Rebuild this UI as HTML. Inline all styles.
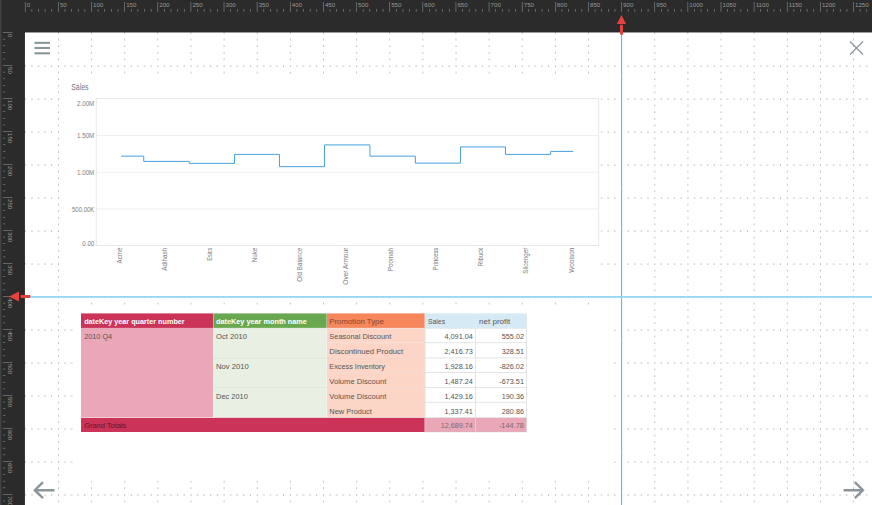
<!DOCTYPE html>
<html lang="en"><head><meta charset="utf-8"><title>Report Designer</title>
<style>

html,body{margin:0;padding:0;background:#2b2b2b;}
body{width:872px;height:505px;overflow:hidden;background:#2b2b2b;font-family:"Liberation Sans",sans-serif;}
#app{position:absolute;left:0;top:0;width:1320px;height:770px;transform-origin:0 0;transform:scale(0.6626,0.6598);background:#2b2b2b;overflow:hidden;}
#edge{position:absolute;left:0;top:0;width:1.6px;height:100%;background:#444;}
#canvas{position:absolute;left:38.0px;top:49.0px;right:0;bottom:0;}
svg{position:absolute;left:0;top:0;overflow:visible;}
.abs{position:absolute;}
.el{position:absolute;background:#fff;}
.fit{display:inline-block;transform-origin:0 50%;white-space:nowrap;}
.r .fit{transform-origin:100% 50%;}
table{border-collapse:collapse;position:absolute;table-layout:fixed;}
td,th{padding:0;margin:0;overflow:hidden;white-space:nowrap;text-align:left;vertical-align:top;font-weight:normal;box-sizing:border-box;}

</style></head><body>
<div id="app">
<div id="edge"></div>
<div id="canvas">
<svg id="grid" width="1320" height="770" style="top:0.59px;left:0.10px">
<rect x="-0.35" y="-0.79" width="1320" height="770" fill="#fff"/>
<defs><pattern id="dots" x="-0.5" y="-0.5" width="50" height="50" patternUnits="userSpaceOnUse">
<rect x="0" y="0" width="1.1" height="1.1" fill="#2a2a2a"/>
<rect x="10" y="0" width="1.1" height="1.1" fill="#2a2a2a"/>
<rect x="20" y="0" width="1.1" height="1.1" fill="#2a2a2a"/>
<rect x="30" y="0" width="1.1" height="1.1" fill="#2a2a2a"/>
<rect x="40" y="0" width="1.1" height="1.1" fill="#2a2a2a"/>
<rect x="0" y="10" width="1.1" height="1.1" fill="#2a2a2a"/>
<rect x="0" y="20" width="1.1" height="1.1" fill="#2a2a2a"/>
<rect x="0" y="30" width="1.1" height="1.1" fill="#2a2a2a"/>
<rect x="0" y="40" width="1.1" height="1.1" fill="#2a2a2a"/>
</pattern></defs>
<rect x="5" y="5" width="1320" height="770" fill="url(#dots)"/>
<rect x="49.5" y="-0.5" width="1.1" height="1.1" fill="#2a2a2a"/>
<rect x="99.5" y="-0.5" width="1.1" height="1.1" fill="#2a2a2a"/>
<rect x="149.5" y="-0.5" width="1.1" height="1.1" fill="#2a2a2a"/>
<rect x="199.5" y="-0.5" width="1.1" height="1.1" fill="#2a2a2a"/>
<rect x="249.5" y="-0.5" width="1.1" height="1.1" fill="#2a2a2a"/>
<rect x="299.5" y="-0.5" width="1.1" height="1.1" fill="#2a2a2a"/>
<rect x="349.5" y="-0.5" width="1.1" height="1.1" fill="#2a2a2a"/>
<rect x="399.5" y="-0.5" width="1.1" height="1.1" fill="#2a2a2a"/>
<rect x="449.5" y="-0.5" width="1.1" height="1.1" fill="#2a2a2a"/>
<rect x="499.5" y="-0.5" width="1.1" height="1.1" fill="#2a2a2a"/>
<rect x="549.5" y="-0.5" width="1.1" height="1.1" fill="#2a2a2a"/>
<rect x="599.5" y="-0.5" width="1.1" height="1.1" fill="#2a2a2a"/>
<rect x="649.5" y="-0.5" width="1.1" height="1.1" fill="#2a2a2a"/>
<rect x="699.5" y="-0.5" width="1.1" height="1.1" fill="#2a2a2a"/>
<rect x="749.5" y="-0.5" width="1.1" height="1.1" fill="#2a2a2a"/>
<rect x="799.5" y="-0.5" width="1.1" height="1.1" fill="#2a2a2a"/>
<rect x="849.5" y="-0.5" width="1.1" height="1.1" fill="#2a2a2a"/>
<rect x="899.5" y="-0.5" width="1.1" height="1.1" fill="#2a2a2a"/>
<rect x="949.5" y="-0.5" width="1.1" height="1.1" fill="#2a2a2a"/>
<rect x="999.5" y="-0.5" width="1.1" height="1.1" fill="#2a2a2a"/>
<rect x="1049.5" y="-0.5" width="1.1" height="1.1" fill="#2a2a2a"/>
<rect x="1099.5" y="-0.5" width="1.1" height="1.1" fill="#2a2a2a"/>
<rect x="1149.5" y="-0.5" width="1.1" height="1.1" fill="#2a2a2a"/>
<rect x="1199.5" y="-0.5" width="1.1" height="1.1" fill="#2a2a2a"/>
<rect x="1249.5" y="-0.5" width="1.1" height="1.1" fill="#2a2a2a"/>
<rect x="1299.5" y="-0.5" width="1.1" height="1.1" fill="#2a2a2a"/>
<rect x="-0.5" y="49.5" width="1.1" height="1.1" fill="#2a2a2a"/>
<rect x="-0.5" y="99.5" width="1.1" height="1.1" fill="#2a2a2a"/>
<rect x="-0.5" y="149.5" width="1.1" height="1.1" fill="#2a2a2a"/>
<rect x="-0.5" y="199.5" width="1.1" height="1.1" fill="#2a2a2a"/>
<rect x="-0.5" y="249.5" width="1.1" height="1.1" fill="#2a2a2a"/>
<rect x="-0.5" y="299.5" width="1.1" height="1.1" fill="#2a2a2a"/>
<rect x="-0.5" y="349.5" width="1.1" height="1.1" fill="#2a2a2a"/>
<rect x="-0.5" y="399.5" width="1.1" height="1.1" fill="#2a2a2a"/>
<rect x="-0.5" y="449.5" width="1.1" height="1.1" fill="#2a2a2a"/>
<rect x="-0.5" y="499.5" width="1.1" height="1.1" fill="#2a2a2a"/>
<rect x="-0.5" y="549.5" width="1.1" height="1.1" fill="#2a2a2a"/>
<rect x="-0.5" y="599.5" width="1.1" height="1.1" fill="#2a2a2a"/>
<rect x="-0.5" y="649.5" width="1.1" height="1.1" fill="#2a2a2a"/>
<rect x="-0.5" y="699.5" width="1.1" height="1.1" fill="#2a2a2a"/>
</svg>
<div class="el" id="chart" style="left:54.06px;top:65.13px;width:814.37px;height:332.22px">
<svg width="814.4" height="332.2" viewBox="54.06 65.13 814.37 332.22" font-family="Liberation Sans, sans-serif">
<line x1="107.26" x2="865.64" y1="156.52" y2="156.52" stroke="#ebebeb" stroke-width="1.2"/>
<line x1="107.26" x2="865.64" y1="212.14" y2="212.14" stroke="#ebebeb" stroke-width="1.2"/>
<line x1="107.26" x2="865.64" y1="267.76" y2="267.76" stroke="#ebebeb" stroke-width="1.2"/>
<rect x="107.26" y="100.67" width="758.38" height="222.42" fill="none" stroke="#e2e2e2" stroke-width="1.2"/>
<text x="69.46" y="88.24" font-size="13.6" fill="#767676" textLength="26.1" lengthAdjust="spacingAndGlyphs">Sales</text>
<text x="104.32" y="111.76" font-size="10.8" fill="#7e7e7e" text-anchor="end" textLength="26.0" lengthAdjust="spacingAndGlyphs">2.00M</text>
<text x="104.32" y="160.72" font-size="10.8" fill="#7e7e7e" text-anchor="end" textLength="26.0" lengthAdjust="spacingAndGlyphs">1.50M</text>
<text x="104.32" y="216.19" font-size="10.8" fill="#7e7e7e" text-anchor="end" textLength="26.0" lengthAdjust="spacingAndGlyphs">1.00M</text>
<text x="104.32" y="271.81" font-size="10.8" fill="#7e7e7e" text-anchor="end" textLength="33.6" lengthAdjust="spacingAndGlyphs">500.00K</text>
<text x="104.32" y="323.95" font-size="10.8" fill="#7e7e7e" text-anchor="end" textLength="18.1" lengthAdjust="spacingAndGlyphs">0.00</text>
<path d="M144.99 187.81 H178.95 V195.77 H247.62 V198.80 H315.91 V185.16 H383.82 V203.73 H451.74 V170.76 H520.41 V187.81 H588.92 V198.42 H656.99 V173.79 H724.90 V185.16 H793.20 V180.62 H827.15" fill="none" stroke="#45a0dc" stroke-width="1.5" stroke-linejoin="miter"/>
<text transform="translate(141.82 326.57) rotate(-90)" x="0" y="3.7" font-size="10.8" fill="#7a7a7a" text-anchor="end" textLength="23.8" lengthAdjust="spacingAndGlyphs">Acme</text>
<text transform="translate(210.04 326.57) rotate(-90)" x="0" y="3.7" font-size="10.8" fill="#7a7a7a" text-anchor="end" textLength="34.9" lengthAdjust="spacingAndGlyphs">Adihash</text>
<text transform="translate(278.25 326.57) rotate(-90)" x="0" y="3.7" font-size="10.8" fill="#7a7a7a" text-anchor="end" textLength="19.7" lengthAdjust="spacingAndGlyphs">Esics</text>
<text transform="translate(346.47 326.57) rotate(-90)" x="0" y="3.7" font-size="10.8" fill="#7a7a7a" text-anchor="end" textLength="22.0" lengthAdjust="spacingAndGlyphs">Nuke</text>
<text transform="translate(414.69 326.57) rotate(-90)" x="0" y="3.7" font-size="10.8" fill="#7a7a7a" text-anchor="end" textLength="51.5" lengthAdjust="spacingAndGlyphs">Old Balance</text>
<text transform="translate(482.90 326.57) rotate(-90)" x="0" y="3.7" font-size="10.8" fill="#7a7a7a" text-anchor="end" textLength="56.1" lengthAdjust="spacingAndGlyphs">Over Armour</text>
<text transform="translate(551.12 326.57) rotate(-90)" x="0" y="3.7" font-size="10.8" fill="#7a7a7a" text-anchor="end" textLength="35.6" lengthAdjust="spacingAndGlyphs">Poomah</text>
<text transform="translate(619.33 326.57) rotate(-90)" x="0" y="3.7" font-size="10.8" fill="#7a7a7a" text-anchor="end" textLength="34.1" lengthAdjust="spacingAndGlyphs">Princess</text>
<text transform="translate(687.55 326.57) rotate(-90)" x="0" y="3.7" font-size="10.8" fill="#7a7a7a" text-anchor="end" textLength="28.0" lengthAdjust="spacingAndGlyphs">Ribuck</text>
<text transform="translate(755.77 326.57) rotate(-90)" x="0" y="3.7" font-size="10.8" fill="#7a7a7a" text-anchor="end" textLength="39.4" lengthAdjust="spacingAndGlyphs">Slicenger</text>
<text transform="translate(823.98 326.57) rotate(-90)" x="0" y="3.7" font-size="10.8" fill="#7a7a7a" text-anchor="end" textLength="37.9" lengthAdjust="spacingAndGlyphs">Woolson</text>
</svg>
</div>
<div class="el" id="tablix" style="left:74.44px;top:416.29px;width:812.10px;height:259.17px">

<style>
#tbl{left:9.96px;top:9.25px;width:672.35px;}
#tbl tr{height:22.514px;}
#tbl td,#tbl th{line-height:18px;height:18px;font-size:12px;color:#555;padding-left:4.3px;}
#tbl th.h1{background:#cc3359;color:#fff;font-weight:bold;font-size:10.67px;}
#tbl th.h2{background:#6aa84f;color:#fff;font-weight:bold;font-size:10.67px;}
#tbl th.h3{background:#f6875d;color:#84442b;}
#tbl th.h4{background:#d6eaf6;color:#555;border:1.2px solid #d5dde2;border-top:none;}
#tbl td.c1{background:#eaa7b8;}
#tbl td.c2{background:#e7f0e3;border-top:1.2px solid #d2dcce;}
#tbl td.c3{background:#fdd5c6;border-top:1.2px solid #efc9bb;}
#tbl td.n{background:#fff;border:1.2px solid #d6d6d6;text-align:right;padding-left:0;padding-right:3.6px;color:#555;}
#tbl td.g{background:#cc3359;color:#5e162b;border-top:1.2px solid #e9b4c1;}
#tbl td.gn{background:#eaa7b8;border:1.2px solid #ddb6c0;text-align:right;padding-left:0;padding-right:3.6px;color:#7a6a70;}
#tbl td span, #tbl th span{position:relative;}
#tbl th.h1 span,#tbl th.h2 span{top:3.0px;}
#tbl th.h3 span{top:3.0px;}
#tbl th.h4 span{top:3.9px;}
#tbl td span{top:3.8px;}
</style>

<table id="tbl"><colgroup><col style="width:199.22px"><col style="width:171.29px"><col style="width:148.51px"><col style="width:76.37px"><col style="width:76.97px"></colgroup>
<tr><th class="h1"><span class="fit" id="h1" style="transform:scaleX(1.0244)">dateKey year quarter number</span></th><th class="h2"><span class="fit" id="h2" style="transform:scaleX(1.0340)">dateKey year month name</span></th><th class="h3"><span class="fit" id="h3" style="transform:scaleX(0.9794)">Promotion Type</span></th><th class="h4"><span class="fit" id="h4" style="transform:scaleX(0.8543)">Sales</span></th><th class="h4"><span class="fit" id="h5" style="transform:scaleX(1.0098)">net profit</span></th></tr>
<tr><td class="c1" rowspan="6"><span class="fit" id="q4" style="transform:scaleX(0.9177)">2010 Q4</span></td><td class="c2" rowspan="2"><span class="fit" id="m0" style="transform:scaleX(0.9575)">Oct 2010</span></td><td class="c3"><span class="fit" id="p0" style="transform:scaleX(0.9351)">Seasonal Discount</span></td><td class="n r"><span class="fit" id="s0" style="transform:scaleX(0.9207)">4,091.04</span></td><td class="n r"><span class="fit" id="n0" style="transform:scaleX(0.9087)">555.02</span></td></tr>
<tr><td class="c3"><span class="fit" id="p1" style="transform:scaleX(0.9757)">Discontinued Product</span></td><td class="n r"><span class="fit" id="s1" style="transform:scaleX(0.9207)">2,416.73</span></td><td class="n r"><span class="fit" id="n1" style="transform:scaleX(0.9087)">328.51</span></td></tr>
<tr><td class="c2" rowspan="2"><span class="fit" id="m2" style="transform:scaleX(0.9621)">Nov 2010</span></td><td class="c3"><span class="fit" id="p2" style="transform:scaleX(0.9183)">Excess Inventory</span></td><td class="n r"><span class="fit" id="s2" style="transform:scaleX(0.9207)">1,928.16</span></td><td class="n r"><span class="fit" id="n2" style="transform:scaleX(0.9121)">-826.02</span></td></tr>
<tr><td class="c3"><span class="fit" id="p3" style="transform:scaleX(0.9553)">Volume Discount</span></td><td class="n r"><span class="fit" id="s3" style="transform:scaleX(0.9207)">1,487.24</span></td><td class="n r"><span class="fit" id="n3" style="transform:scaleX(0.9121)">-673.51</span></td></tr>
<tr><td class="c2" rowspan="2"><span class="fit" id="m4" style="transform:scaleX(0.9371)">Dec 2010</span></td><td class="c3"><span class="fit" id="p4" style="transform:scaleX(0.9553)">Volume Discount</span></td><td class="n r"><span class="fit" id="s4" style="transform:scaleX(0.9207)">1,429.16</span></td><td class="n r"><span class="fit" id="n4" style="transform:scaleX(0.9087)">190.36</span></td></tr>
<tr><td class="c3"><span class="fit" id="p5" style="transform:scaleX(0.9336)">New Product</span></td><td class="n r"><span class="fit" id="s5" style="transform:scaleX(0.9207)">1,337.41</span></td><td class="n r"><span class="fit" id="n5" style="transform:scaleX(0.9087)">280.86</span></td></tr>
<tr><td class="g" colspan="3"><span class="fit" id="gt" style="transform:scaleX(0.9367)">Grand Totals</span></td><td class="gn r"><span class="fit" id="gs" style="transform:scaleX(0.9046)">12,689.74</span></td><td class="gn r"><span class="fit" id="gn" style="transform:scaleX(0.9270)">-144.78</span></td></tr>
</table>
</div>
<svg id="icons" width="1320" height="770">
<rect x="14.07" y="14.34" width="23.39" height="3.20" fill="#8b969b"/>
<rect x="14.07" y="22.12" width="23.39" height="3.20" fill="#8b969b"/>
<rect x="14.07" y="30.18" width="23.39" height="3.20" fill="#8b969b"/>
<path d="M1244.83 13.90 L1264.44 33.60 M1264.44 13.90 L1244.83 33.60" stroke="#8b969b" stroke-width="1.8" fill="none"/>
<path d="M44.18 693.95 H15.58 M26.90 681.83 L14.52 693.95 L26.90 706.08" stroke="#8b969b" stroke-width="3.6" fill="none" stroke-linejoin="miter"/>
<path d="M1235.02 693.95 H1263.69 M1252.07 681.83 L1264.44 693.95 L1252.07 706.08" stroke="#8b969b" stroke-width="3.6" fill="none" stroke-linejoin="miter"/>
<rect x="899.26" y="-3.00" width="1.6" height="770" fill="#5abcec"/>
<rect x="-3.00" y="399.68" width="1320" height="2.6" fill="#93d6f3"/>
</svg>
</div>
<svg id="rulers" width="1320" height="770" font-family="Liberation Sans, sans-serif" font-size="9.3" fill="#999">
<rect x="37.60" y="3" width="1" height="15" fill="#858585"/>
<text x="40.40" y="10.6">0</text>
<rect x="47.60" y="13.6" width="1" height="4.4" fill="#858585"/>
<rect x="57.60" y="13.6" width="1" height="4.4" fill="#858585"/>
<rect x="67.60" y="13.6" width="1" height="4.4" fill="#858585"/>
<rect x="77.60" y="13.6" width="1" height="4.4" fill="#858585"/>
<rect x="87.60" y="3" width="1" height="15" fill="#858585"/>
<text x="90.40" y="10.6">50</text>
<rect x="97.60" y="13.6" width="1" height="4.4" fill="#858585"/>
<rect x="107.60" y="13.6" width="1" height="4.4" fill="#858585"/>
<rect x="117.60" y="13.6" width="1" height="4.4" fill="#858585"/>
<rect x="127.60" y="13.6" width="1" height="4.4" fill="#858585"/>
<rect x="137.60" y="3" width="1" height="15" fill="#858585"/>
<text x="140.40" y="10.6">100</text>
<rect x="147.60" y="13.6" width="1" height="4.4" fill="#858585"/>
<rect x="157.60" y="13.6" width="1" height="4.4" fill="#858585"/>
<rect x="167.60" y="13.6" width="1" height="4.4" fill="#858585"/>
<rect x="177.60" y="13.6" width="1" height="4.4" fill="#858585"/>
<rect x="187.60" y="3" width="1" height="15" fill="#858585"/>
<text x="190.40" y="10.6">150</text>
<rect x="197.60" y="13.6" width="1" height="4.4" fill="#858585"/>
<rect x="207.60" y="13.6" width="1" height="4.4" fill="#858585"/>
<rect x="217.60" y="13.6" width="1" height="4.4" fill="#858585"/>
<rect x="227.60" y="13.6" width="1" height="4.4" fill="#858585"/>
<rect x="237.60" y="3" width="1" height="15" fill="#858585"/>
<text x="240.40" y="10.6">200</text>
<rect x="247.60" y="13.6" width="1" height="4.4" fill="#858585"/>
<rect x="257.60" y="13.6" width="1" height="4.4" fill="#858585"/>
<rect x="267.60" y="13.6" width="1" height="4.4" fill="#858585"/>
<rect x="277.60" y="13.6" width="1" height="4.4" fill="#858585"/>
<rect x="287.60" y="3" width="1" height="15" fill="#858585"/>
<text x="290.40" y="10.6">250</text>
<rect x="297.60" y="13.6" width="1" height="4.4" fill="#858585"/>
<rect x="307.60" y="13.6" width="1" height="4.4" fill="#858585"/>
<rect x="317.60" y="13.6" width="1" height="4.4" fill="#858585"/>
<rect x="327.60" y="13.6" width="1" height="4.4" fill="#858585"/>
<rect x="337.60" y="3" width="1" height="15" fill="#858585"/>
<text x="340.40" y="10.6">300</text>
<rect x="347.60" y="13.6" width="1" height="4.4" fill="#858585"/>
<rect x="357.60" y="13.6" width="1" height="4.4" fill="#858585"/>
<rect x="367.60" y="13.6" width="1" height="4.4" fill="#858585"/>
<rect x="377.60" y="13.6" width="1" height="4.4" fill="#858585"/>
<rect x="387.60" y="3" width="1" height="15" fill="#858585"/>
<text x="390.40" y="10.6">350</text>
<rect x="397.60" y="13.6" width="1" height="4.4" fill="#858585"/>
<rect x="407.60" y="13.6" width="1" height="4.4" fill="#858585"/>
<rect x="417.60" y="13.6" width="1" height="4.4" fill="#858585"/>
<rect x="427.60" y="13.6" width="1" height="4.4" fill="#858585"/>
<rect x="437.60" y="3" width="1" height="15" fill="#858585"/>
<text x="440.40" y="10.6">400</text>
<rect x="447.60" y="13.6" width="1" height="4.4" fill="#858585"/>
<rect x="457.60" y="13.6" width="1" height="4.4" fill="#858585"/>
<rect x="467.60" y="13.6" width="1" height="4.4" fill="#858585"/>
<rect x="477.60" y="13.6" width="1" height="4.4" fill="#858585"/>
<rect x="487.60" y="3" width="1" height="15" fill="#858585"/>
<text x="490.40" y="10.6">450</text>
<rect x="497.60" y="13.6" width="1" height="4.4" fill="#858585"/>
<rect x="507.60" y="13.6" width="1" height="4.4" fill="#858585"/>
<rect x="517.60" y="13.6" width="1" height="4.4" fill="#858585"/>
<rect x="527.60" y="13.6" width="1" height="4.4" fill="#858585"/>
<rect x="537.60" y="3" width="1" height="15" fill="#858585"/>
<text x="540.40" y="10.6">500</text>
<rect x="547.60" y="13.6" width="1" height="4.4" fill="#858585"/>
<rect x="557.60" y="13.6" width="1" height="4.4" fill="#858585"/>
<rect x="567.60" y="13.6" width="1" height="4.4" fill="#858585"/>
<rect x="577.60" y="13.6" width="1" height="4.4" fill="#858585"/>
<rect x="587.60" y="3" width="1" height="15" fill="#858585"/>
<text x="590.40" y="10.6">550</text>
<rect x="597.60" y="13.6" width="1" height="4.4" fill="#858585"/>
<rect x="607.60" y="13.6" width="1" height="4.4" fill="#858585"/>
<rect x="617.60" y="13.6" width="1" height="4.4" fill="#858585"/>
<rect x="627.60" y="13.6" width="1" height="4.4" fill="#858585"/>
<rect x="637.60" y="3" width="1" height="15" fill="#858585"/>
<text x="640.40" y="10.6">600</text>
<rect x="647.60" y="13.6" width="1" height="4.4" fill="#858585"/>
<rect x="657.60" y="13.6" width="1" height="4.4" fill="#858585"/>
<rect x="667.60" y="13.6" width="1" height="4.4" fill="#858585"/>
<rect x="677.60" y="13.6" width="1" height="4.4" fill="#858585"/>
<rect x="687.60" y="3" width="1" height="15" fill="#858585"/>
<text x="690.40" y="10.6">650</text>
<rect x="697.60" y="13.6" width="1" height="4.4" fill="#858585"/>
<rect x="707.60" y="13.6" width="1" height="4.4" fill="#858585"/>
<rect x="717.60" y="13.6" width="1" height="4.4" fill="#858585"/>
<rect x="727.60" y="13.6" width="1" height="4.4" fill="#858585"/>
<rect x="737.60" y="3" width="1" height="15" fill="#858585"/>
<text x="740.40" y="10.6">700</text>
<rect x="747.60" y="13.6" width="1" height="4.4" fill="#858585"/>
<rect x="757.60" y="13.6" width="1" height="4.4" fill="#858585"/>
<rect x="767.60" y="13.6" width="1" height="4.4" fill="#858585"/>
<rect x="777.60" y="13.6" width="1" height="4.4" fill="#858585"/>
<rect x="787.60" y="3" width="1" height="15" fill="#858585"/>
<text x="790.40" y="10.6">750</text>
<rect x="797.60" y="13.6" width="1" height="4.4" fill="#858585"/>
<rect x="807.60" y="13.6" width="1" height="4.4" fill="#858585"/>
<rect x="817.60" y="13.6" width="1" height="4.4" fill="#858585"/>
<rect x="827.60" y="13.6" width="1" height="4.4" fill="#858585"/>
<rect x="837.60" y="3" width="1" height="15" fill="#858585"/>
<text x="840.40" y="10.6">800</text>
<rect x="847.60" y="13.6" width="1" height="4.4" fill="#858585"/>
<rect x="857.60" y="13.6" width="1" height="4.4" fill="#858585"/>
<rect x="867.60" y="13.6" width="1" height="4.4" fill="#858585"/>
<rect x="877.60" y="13.6" width="1" height="4.4" fill="#858585"/>
<rect x="887.60" y="3" width="1" height="15" fill="#858585"/>
<text x="890.40" y="10.6">850</text>
<rect x="897.60" y="13.6" width="1" height="4.4" fill="#858585"/>
<rect x="907.60" y="13.6" width="1" height="4.4" fill="#858585"/>
<rect x="917.60" y="13.6" width="1" height="4.4" fill="#858585"/>
<rect x="927.60" y="13.6" width="1" height="4.4" fill="#858585"/>
<rect x="937.60" y="3" width="1" height="15" fill="#858585"/>
<text x="940.40" y="10.6">900</text>
<rect x="947.60" y="13.6" width="1" height="4.4" fill="#858585"/>
<rect x="957.60" y="13.6" width="1" height="4.4" fill="#858585"/>
<rect x="967.60" y="13.6" width="1" height="4.4" fill="#858585"/>
<rect x="977.60" y="13.6" width="1" height="4.4" fill="#858585"/>
<rect x="987.60" y="3" width="1" height="15" fill="#858585"/>
<text x="990.40" y="10.6">950</text>
<rect x="997.60" y="13.6" width="1" height="4.4" fill="#858585"/>
<rect x="1007.60" y="13.6" width="1" height="4.4" fill="#858585"/>
<rect x="1017.60" y="13.6" width="1" height="4.4" fill="#858585"/>
<rect x="1027.60" y="13.6" width="1" height="4.4" fill="#858585"/>
<rect x="1037.60" y="3" width="1" height="15" fill="#858585"/>
<text x="1040.40" y="10.6">1000</text>
<rect x="1047.60" y="13.6" width="1" height="4.4" fill="#858585"/>
<rect x="1057.60" y="13.6" width="1" height="4.4" fill="#858585"/>
<rect x="1067.60" y="13.6" width="1" height="4.4" fill="#858585"/>
<rect x="1077.60" y="13.6" width="1" height="4.4" fill="#858585"/>
<rect x="1087.60" y="3" width="1" height="15" fill="#858585"/>
<text x="1090.40" y="10.6">1050</text>
<rect x="1097.60" y="13.6" width="1" height="4.4" fill="#858585"/>
<rect x="1107.60" y="13.6" width="1" height="4.4" fill="#858585"/>
<rect x="1117.60" y="13.6" width="1" height="4.4" fill="#858585"/>
<rect x="1127.60" y="13.6" width="1" height="4.4" fill="#858585"/>
<rect x="1137.60" y="3" width="1" height="15" fill="#858585"/>
<text x="1140.40" y="10.6">1100</text>
<rect x="1147.60" y="13.6" width="1" height="4.4" fill="#858585"/>
<rect x="1157.60" y="13.6" width="1" height="4.4" fill="#858585"/>
<rect x="1167.60" y="13.6" width="1" height="4.4" fill="#858585"/>
<rect x="1177.60" y="13.6" width="1" height="4.4" fill="#858585"/>
<rect x="1187.60" y="3" width="1" height="15" fill="#858585"/>
<text x="1190.40" y="10.6">1150</text>
<rect x="1197.60" y="13.6" width="1" height="4.4" fill="#858585"/>
<rect x="1207.60" y="13.6" width="1" height="4.4" fill="#858585"/>
<rect x="1217.60" y="13.6" width="1" height="4.4" fill="#858585"/>
<rect x="1227.60" y="13.6" width="1" height="4.4" fill="#858585"/>
<rect x="1237.60" y="3" width="1" height="15" fill="#858585"/>
<text x="1240.40" y="10.6">1200</text>
<rect x="1247.60" y="13.6" width="1" height="4.4" fill="#858585"/>
<rect x="1257.60" y="13.6" width="1" height="4.4" fill="#858585"/>
<rect x="1267.60" y="13.6" width="1" height="4.4" fill="#858585"/>
<rect x="1277.60" y="13.6" width="1" height="4.4" fill="#858585"/>
<rect x="1287.60" y="3" width="1" height="15" fill="#858585"/>
<text x="1290.40" y="10.6">1250</text>
<rect x="1297.60" y="13.6" width="1" height="4.4" fill="#858585"/>
<rect x="1307.60" y="13.6" width="1" height="4.4" fill="#858585"/>
<rect x="1317.60" y="13.6" width="1" height="4.4" fill="#858585"/>
<rect x="4.5" y="48.83" width="14.2" height="1" fill="#858585"/>
<text transform="translate(11.80 51.63) rotate(90)" x="0" y="0">0</text>
<rect x="4.5" y="58.83" width="3.5" height="1" fill="#858585"/>
<rect x="4.5" y="68.83" width="3.5" height="1" fill="#858585"/>
<rect x="4.5" y="78.83" width="3.5" height="1" fill="#858585"/>
<rect x="4.5" y="88.83" width="3.5" height="1" fill="#858585"/>
<rect x="4.5" y="98.83" width="14.2" height="1" fill="#858585"/>
<text transform="translate(11.80 101.63) rotate(90)" x="0" y="0">50</text>
<rect x="4.5" y="108.83" width="3.5" height="1" fill="#858585"/>
<rect x="4.5" y="118.83" width="3.5" height="1" fill="#858585"/>
<rect x="4.5" y="128.83" width="3.5" height="1" fill="#858585"/>
<rect x="4.5" y="138.83" width="3.5" height="1" fill="#858585"/>
<rect x="4.5" y="148.83" width="14.2" height="1" fill="#858585"/>
<text transform="translate(11.80 151.63) rotate(90)" x="0" y="0">100</text>
<rect x="4.5" y="158.83" width="3.5" height="1" fill="#858585"/>
<rect x="4.5" y="168.83" width="3.5" height="1" fill="#858585"/>
<rect x="4.5" y="178.83" width="3.5" height="1" fill="#858585"/>
<rect x="4.5" y="188.83" width="3.5" height="1" fill="#858585"/>
<rect x="4.5" y="198.83" width="14.2" height="1" fill="#858585"/>
<text transform="translate(11.80 201.63) rotate(90)" x="0" y="0">150</text>
<rect x="4.5" y="208.83" width="3.5" height="1" fill="#858585"/>
<rect x="4.5" y="218.83" width="3.5" height="1" fill="#858585"/>
<rect x="4.5" y="228.83" width="3.5" height="1" fill="#858585"/>
<rect x="4.5" y="238.83" width="3.5" height="1" fill="#858585"/>
<rect x="4.5" y="248.83" width="14.2" height="1" fill="#858585"/>
<text transform="translate(11.80 251.63) rotate(90)" x="0" y="0">200</text>
<rect x="4.5" y="258.83" width="3.5" height="1" fill="#858585"/>
<rect x="4.5" y="268.83" width="3.5" height="1" fill="#858585"/>
<rect x="4.5" y="278.83" width="3.5" height="1" fill="#858585"/>
<rect x="4.5" y="288.83" width="3.5" height="1" fill="#858585"/>
<rect x="4.5" y="298.83" width="14.2" height="1" fill="#858585"/>
<text transform="translate(11.80 301.63) rotate(90)" x="0" y="0">250</text>
<rect x="4.5" y="308.83" width="3.5" height="1" fill="#858585"/>
<rect x="4.5" y="318.83" width="3.5" height="1" fill="#858585"/>
<rect x="4.5" y="328.83" width="3.5" height="1" fill="#858585"/>
<rect x="4.5" y="338.83" width="3.5" height="1" fill="#858585"/>
<rect x="4.5" y="348.83" width="14.2" height="1" fill="#858585"/>
<text transform="translate(11.80 351.63) rotate(90)" x="0" y="0">300</text>
<rect x="4.5" y="358.83" width="3.5" height="1" fill="#858585"/>
<rect x="4.5" y="368.83" width="3.5" height="1" fill="#858585"/>
<rect x="4.5" y="378.83" width="3.5" height="1" fill="#858585"/>
<rect x="4.5" y="388.83" width="3.5" height="1" fill="#858585"/>
<rect x="4.5" y="398.83" width="14.2" height="1" fill="#858585"/>
<text transform="translate(11.80 401.63) rotate(90)" x="0" y="0">350</text>
<rect x="4.5" y="408.83" width="3.5" height="1" fill="#858585"/>
<rect x="4.5" y="418.83" width="3.5" height="1" fill="#858585"/>
<rect x="4.5" y="428.83" width="3.5" height="1" fill="#858585"/>
<rect x="4.5" y="438.83" width="3.5" height="1" fill="#858585"/>
<rect x="4.5" y="448.83" width="14.2" height="1" fill="#858585"/>
<text transform="translate(11.80 451.63) rotate(90)" x="0" y="0">400</text>
<rect x="4.5" y="458.83" width="3.5" height="1" fill="#858585"/>
<rect x="4.5" y="468.83" width="3.5" height="1" fill="#858585"/>
<rect x="4.5" y="478.83" width="3.5" height="1" fill="#858585"/>
<rect x="4.5" y="488.83" width="3.5" height="1" fill="#858585"/>
<rect x="4.5" y="498.83" width="14.2" height="1" fill="#858585"/>
<text transform="translate(11.80 501.63) rotate(90)" x="0" y="0">450</text>
<rect x="4.5" y="508.83" width="3.5" height="1" fill="#858585"/>
<rect x="4.5" y="518.83" width="3.5" height="1" fill="#858585"/>
<rect x="4.5" y="528.83" width="3.5" height="1" fill="#858585"/>
<rect x="4.5" y="538.83" width="3.5" height="1" fill="#858585"/>
<rect x="4.5" y="548.83" width="14.2" height="1" fill="#858585"/>
<text transform="translate(11.80 551.63) rotate(90)" x="0" y="0">500</text>
<rect x="4.5" y="558.83" width="3.5" height="1" fill="#858585"/>
<rect x="4.5" y="568.83" width="3.5" height="1" fill="#858585"/>
<rect x="4.5" y="578.83" width="3.5" height="1" fill="#858585"/>
<rect x="4.5" y="588.83" width="3.5" height="1" fill="#858585"/>
<rect x="4.5" y="598.83" width="14.2" height="1" fill="#858585"/>
<text transform="translate(11.80 601.63) rotate(90)" x="0" y="0">550</text>
<rect x="4.5" y="608.83" width="3.5" height="1" fill="#858585"/>
<rect x="4.5" y="618.83" width="3.5" height="1" fill="#858585"/>
<rect x="4.5" y="628.83" width="3.5" height="1" fill="#858585"/>
<rect x="4.5" y="638.83" width="3.5" height="1" fill="#858585"/>
<rect x="4.5" y="648.83" width="14.2" height="1" fill="#858585"/>
<text transform="translate(11.80 651.63) rotate(90)" x="0" y="0">600</text>
<rect x="4.5" y="658.83" width="3.5" height="1" fill="#858585"/>
<rect x="4.5" y="668.83" width="3.5" height="1" fill="#858585"/>
<rect x="4.5" y="678.83" width="3.5" height="1" fill="#858585"/>
<rect x="4.5" y="688.83" width="3.5" height="1" fill="#858585"/>
<rect x="4.5" y="698.83" width="14.2" height="1" fill="#858585"/>
<text transform="translate(11.80 701.63) rotate(90)" x="0" y="0">650</text>
<rect x="4.5" y="708.83" width="3.5" height="1" fill="#858585"/>
<rect x="4.5" y="718.83" width="3.5" height="1" fill="#858585"/>
<rect x="4.5" y="728.83" width="3.5" height="1" fill="#858585"/>
<rect x="4.5" y="738.83" width="3.5" height="1" fill="#858585"/>
<rect x="4.5" y="748.83" width="14.2" height="1" fill="#858585"/>
<text transform="translate(11.80 751.63) rotate(90)" x="0" y="0">700</text>
<rect x="4.5" y="758.83" width="3.5" height="1" fill="#858585"/>
<rect x="4.5" y="768.83" width="3.5" height="1" fill="#858585"/>
<path d="M937.97 22.73 L944.91 36.37 L931.03 36.37 Z" fill="#e8423f"/>
<rect x="935.71" y="37.59" width="4.53" height="14.85" fill="#e8423f"/>
<path d="M13.58 449.38 L28.67 441.95 L28.67 456.81 Z" fill="#e8423f"/>
<rect x="31.09" y="447.11" width="14.49" height="4.55" fill="#e8423f"/>
</svg>
</div>
</body></html>
